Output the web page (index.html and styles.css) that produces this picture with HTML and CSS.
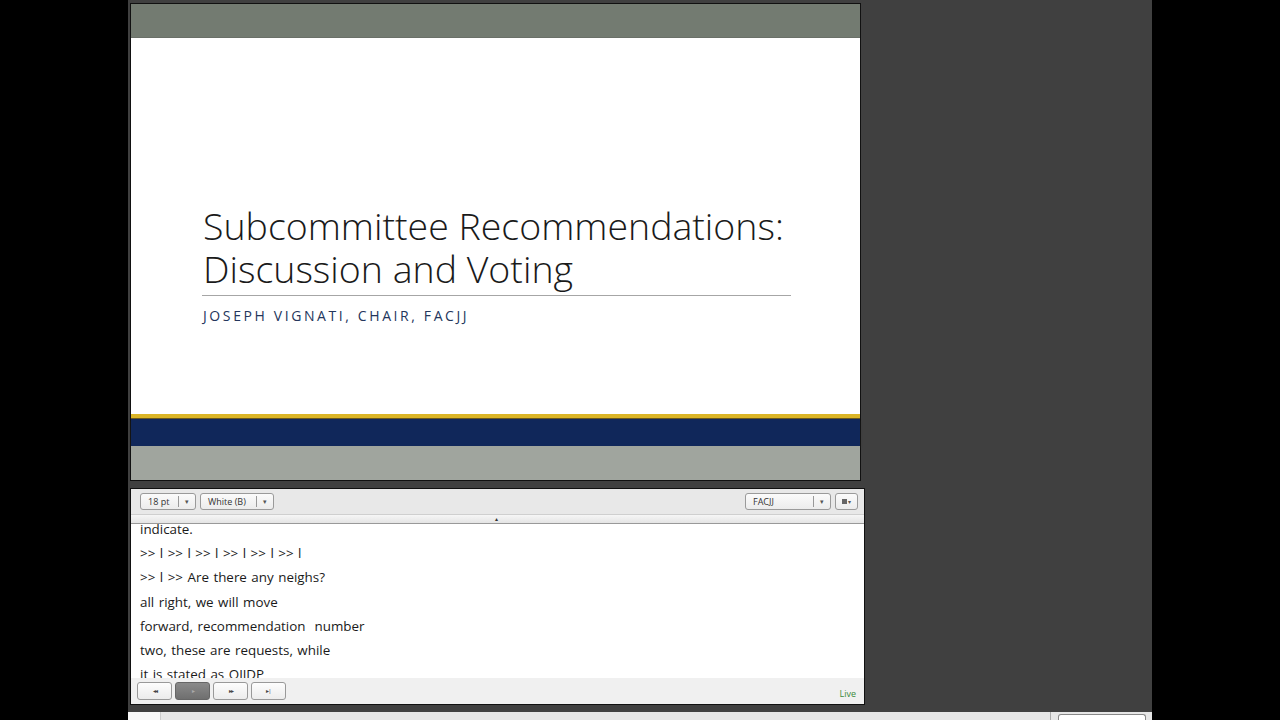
FILE: index.html
```html
<!DOCTYPE html>
<html>
<head>
<meta charset="utf-8">
<link rel="stylesheet" href="styles.css">
</head>
<body>
<div class="screen">
  <div class="main">
    <div class="slide">
      <div class="band-top"></div>
      <div class="slide-body">
        <div class="title">Subcommittee Recommendations:<br>Discussion and Voting</div>
        <div class="rule"></div>
        <div class="subtitle">JOSEPH VIGNATI, CHAIR, FACJJ</div>
      </div>
      <div class="band-yellow"></div>
      <div class="band-navy"></div>
      <div class="band-bottom"></div>
    </div>
    <div class="caption">
      <div class="toolbar">
        <div class="combo w-size"><span class="combo-label">18 pt</span><span class="combo-caret">▾</span></div>
        <div class="combo w-color"><span class="combo-label">White (B)</span><span class="combo-caret">▾</span></div>
        <div class="spacer"></div>
        <div class="combo w-name"><span class="combo-label">FACJJ</span><span class="combo-caret">▾</span></div>
        <div class="menu-btn"><span class="sq"></span><span class="mcaret">▾</span></div>
      </div>
      <div class="grip"><span class="grip-arrow">▴</span></div>
      <div class="text-area">
        <div class="line">indicate.</div>
        <div class="line">&gt;&gt; l &gt;&gt; l &gt;&gt; l &gt;&gt; l &gt;&gt; l &gt;&gt; l</div>
        <div class="line">&gt;&gt; l &gt;&gt; Are there any neighs?</div>
        <div class="line">all right, we will move</div>
        <div class="line">forward, recommendation&nbsp; number</div>
        <div class="line">two, these are requests, while</div>
        <div class="line">it is stated as OJJDP</div>
      </div>
      <div class="controls">
        <div class="ctl">◂◂</div>
        <div class="ctl pressed">▸</div>
        <div class="ctl">▸▸</div>
        <div class="ctl">▸|</div>
        <div class="spacer"></div>
        <div class="live">Live</div>
      </div>
    </div>
    <div class="bottombar">
      <div class="tab"></div>
      <div class="spacer"></div>
      <div class="sep"></div>
      <div class="box"></div>
    </div>
  </div>
</div>
</body>
</html>
```
FILE: styles.css
```css
html, body {
  margin: 0;
  padding: 0;
  background: #000;
  width: 1280px;
  height: 720px;
  overflow: hidden;
}
.screen {
  width: 1280px;
  height: 720px;
  display: flex;
  justify-content: center;
  background: #000;
}
.main {
  width: 1024px;
  height: 720px;
  background: #404040;
  display: flex;
  flex-direction: column;
  padding: 3px 0 0 2px;
  box-sizing: border-box;
}
.slide {
  width: 731px;
  height: 478px;
  border: 1px solid #111;
  box-sizing: border-box;
  display: flex;
  flex-direction: column;
  background: #fff;
}
.band-top {
  height: 33px;
  background: #737b71;
  border-bottom: 1px solid #6a7068;
}
.slide-body {
  flex: 1;
  padding: 166px 0 0 72px;
  box-sizing: border-box;
  font-family: "Open Sans", "Noto Sans", sans-serif;
}
.title {
  font-weight: 300;
  font-size: 37.5px;
  line-height: 43px;
  color: #1a1a1a;
  letter-spacing: 0;
}
.rule {
  width: 589px;
  height: 1px;
  background: #a6a6a6;
  margin-top: 5px;
  margin-left: -1px;
}
.subtitle {
  margin-top: 10px;
  font-size: 14px;
  letter-spacing: 2.6px;
  color: #24365c;
  font-weight: 400;
}
.band-yellow {
  height: 4px;
  background: #dbb526;
  border-bottom: 1px solid #6b5a20;
}
.band-navy {
  height: 27px;
  background: #10275a;
  box-shadow: 0 2px 2px rgba(40,40,40,0.6);
}
.band-bottom {
  height: 34px;
  background: #a0a59e;
}
.caption {
  margin-top: 7px;
  width: 735px;
  height: 217px;
  border: 1px solid #111;
  box-sizing: border-box;
  background: #fff;
  display: flex;
  flex-direction: column;
  font-family: "Open Sans", "Noto Sans", sans-serif;
}
.toolbar {
  height: 25px;
  background: #e8e8e8;
  display: flex;
  align-items: center;
  padding: 0 6px 0 9px;
  gap: 4px;
  box-sizing: border-box;
}
.spacer { flex: 1; }
.combo {
  height: 17px;
  border: 1px solid #9a9a9a;
  border-radius: 3px;
  background: linear-gradient(#fbfbfb, #ececec);
  display: flex;
  align-items: center;
  box-sizing: border-box;
  font-size: 9px;
  color: #333;
}
.combo-label {
  flex: 1;
  padding-left: 7px;
  height: 11px;
  line-height: 11px;
  border-right: 1px solid #999;
}
.combo-caret {
  width: 16px;
  text-align: center;
  font-size: 7px;
  color: #555;
}
.w-size { width: 56px; }
.w-color { width: 74px; }
.w-name { width: 86px; }
.menu-btn {
  width: 23px;
  height: 17px;
  border: 1px solid #9a9a9a;
  border-radius: 3px;
  background: linear-gradient(#fbfbfb, #ececec);
  box-sizing: border-box;
  display: flex;
  align-items: center;
  justify-content: center;
  gap: 1px;
}
.sq {
  width: 5px;
  height: 5px;
  background: #666;
}
.mcaret {
  font-size: 6px;
  color: #555;
}
.grip {
  height: 8px;
  background: linear-gradient(#f6f6f6, #e4e4e4);
  border-top: 1px solid #cfcfcf;
  border-bottom: 1px solid #999;
  display: flex;
  justify-content: center;
  align-items: center;
  padding-right: 2px;
}
.grip-arrow {
  font-size: 6px;
  line-height: 6px;
  color: #333;
}
.text-area {
  flex: 1;
  overflow: hidden;
  padding: 0 0 0 9px;
  font-size: 13.4px;
  color: #1a1a1a;
  line-height: 24.2px;
  margin-top: -7px;
  word-spacing: 1px;
}
.line { white-space: nowrap; }
.controls {
  height: 26px;
  background: #f0f0f0;
  display: flex;
  align-items: center;
  gap: 3px;
  padding: 0 8px 0 6px;
  box-sizing: border-box;
}
.ctl {
  width: 35px;
  height: 18px;
  border: 1px solid #999;
  border-radius: 3px;
  background: linear-gradient(#fdfdfd, #ececec);
  box-sizing: border-box;
  font-size: 6px;
  color: #444;
  display: flex;
  align-items: center;
  justify-content: center;
  letter-spacing: -1px;
}
.ctl.pressed {
  background: linear-gradient(#8a8a8a, #6f6f6f);
  border-color: #666;
  color: #aaa;
}
.live {
  font-size: 9px;
  color: #3a8a3a;
  padding-top: 4px;
}
.bottombar {
  margin-top: 7px;
  margin-left: -2px;
  flex: 1;
  background: #e6e6e6;
  display: flex;
}
.tab {
  width: 32px;
  background: #f8f8f8;
  border-right: 1px solid #ccc;
}
.sep {
  width: 1px;
  background: #aaa;
  margin-right: 7px;
}
.box {
  width: 86px;
  margin-top: 2px;
  border: 1px solid #888;
  border-bottom: none;
  border-radius: 3px 3px 0 0;
  background: #fff;
  margin-right: 6px;
}
```
